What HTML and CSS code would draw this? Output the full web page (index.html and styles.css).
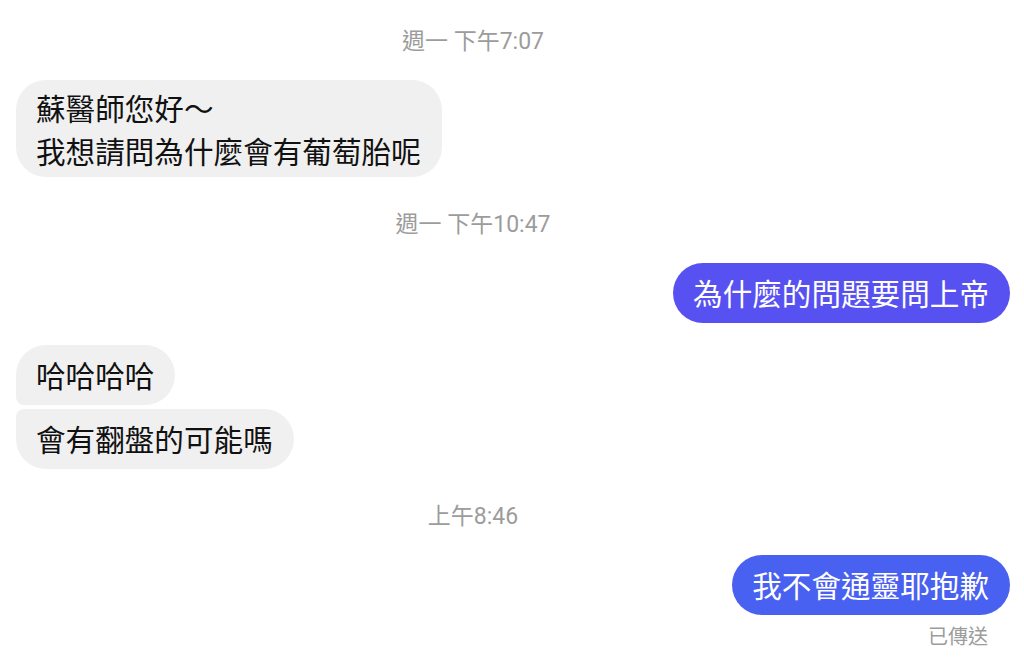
FILE: index.html
```html
<!DOCTYPE html>
<html lang="zh-Hant">
<head>
  <meta charset="UTF-8">
  <meta name="viewport" content="width=device-width, initial-scale=1">
  <title>訊息</title>
  <link rel="stylesheet" href="styles.css">
</head>
<body>
  <div class="chat">
    <div class="time first">週一 下午7:07</div>
    <div class="group in">
      <div class="bubble multi">蘇醫師您好～<br>我想請問為什麼會有葡萄胎呢</div>
    </div>

    <div class="time">週一 下午10:47</div>
    <div class="group out">
      <div class="bubble purple">為什麼的問題要問上帝</div>
    </div>

    <div class="group in spaced">
      <div class="bubble top">哈哈哈哈</div>
      <div class="bubble bottom">會有翻盤的可能嗎</div>
    </div>

    <div class="time">上午8:46</div>
    <div class="group out">
      <div class="bubble blue">我不會通靈耶抱歉</div>
      <div class="status">已傳送</div>
    </div>
  </div>
</body>
</html>
```

FILE: styles.css
```css
* {
  box-sizing: border-box;
  margin: 0;
  padding: 0;
}
body {
  font-family: "Noto Sans CJK TC", "Noto Sans", sans-serif;
  background: #fff;
  color: #111;
}
.chat {
  display: flex;
  flex-direction: column;
  padding: 0 14px 0 16px;
}

/* marcas de tiempo */
.time {
  font-family: Roboto, "Noto Sans CJK TC", sans-serif;
  font-size: 23px;
  line-height: 30px;
  color: #9c9c9c;
  text-align: center;
  padding-right: 80px;
  margin: 33px 0 23px;
}
.time.first {
  margin-top: 27px;
}

.group {
  display: flex;
  flex-direction: column;
  gap: 4px;
}
.group.in {
  align-items: flex-start;
}
.group.out {
  align-items: flex-end;
}
.group.spaced {
  margin-top: 22px;
}

.bubble {
  font-size: 29.6px;
  line-height: 38px;
  padding: 11px 21px 11px 20px;
  border-radius: 30px;
  background: #f0f0f0;
  color: #111;
}
.bubble.multi {
  line-height: 43px;
  padding-top: 6px;
  padding-bottom: 5px;
}
.bubble.top {
  border-bottom-left-radius: 8px;
}
.bubble.bottom {
  border-top-left-radius: 8px;
}
.bubble.purple {
  background: #5851f2;
  color: #fff;
}
.bubble.blue {
  background: #4961f0;
  color: #fff;
}
.status {
  font-size: 20px;
  line-height: 26px;
  color: #9c9c9c;
  margin-top: 4px;
  padding-right: 22px;
}
```
